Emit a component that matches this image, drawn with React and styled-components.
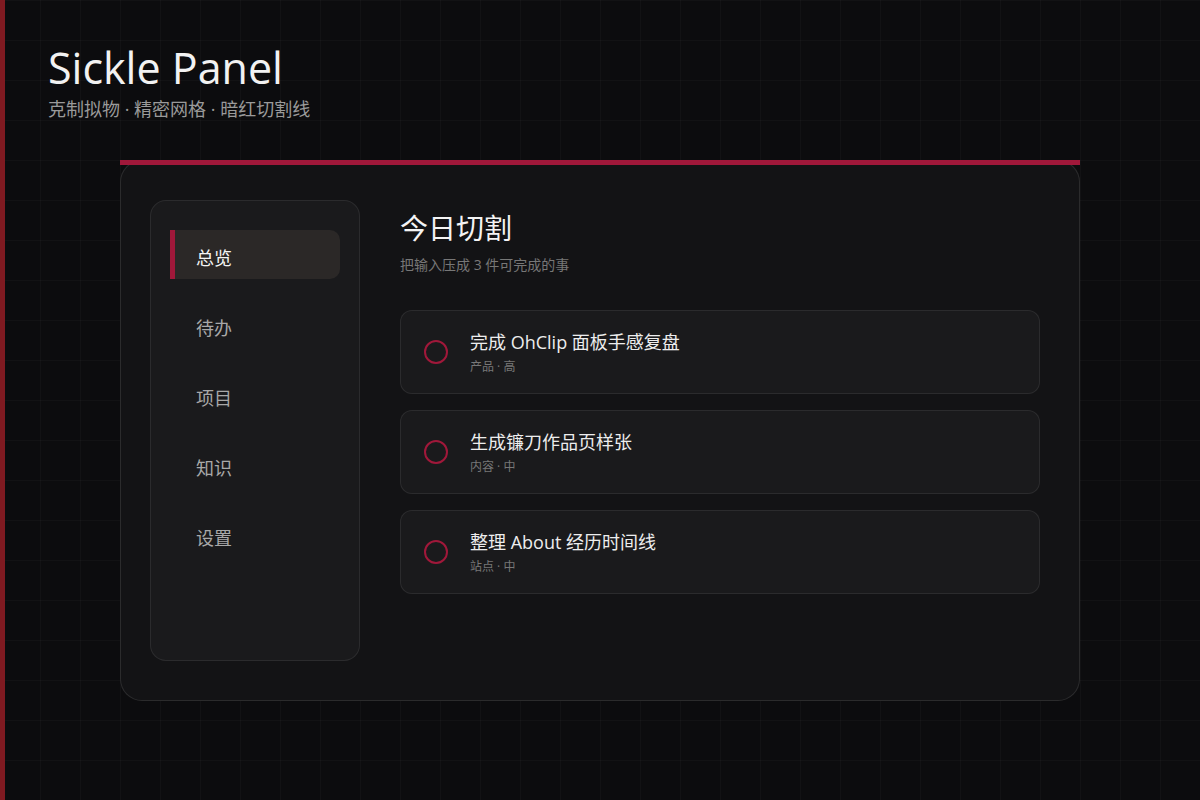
import React from "react";
import styled, { createGlobalStyle } from "styled-components";

const Global = createGlobalStyle`
  html, body {
    margin: 0;
    padding: 0;
    background: #0c0c0e;
  }
  body {
    font-family: "Open Sans", "Noto Sans CJK SC", sans-serif;
    color: #eee;
    min-height: 800px;
    background-color: #0c0c0e;
    background-image:
      linear-gradient(rgba(255,255,255,0.025) 1px, transparent 1px),
      linear-gradient(90deg, rgba(255,255,255,0.025) 1px, transparent 1px);
    background-size: 40px 40px;
  }
`;

const Page = styled.div`
  position: relative;
  min-height: 800px;
  box-sizing: border-box;
  padding: 39px 48px 0 43px;
  border-left: 5px solid #801a21;
`;

const Header = styled.header`
  display: flex;
  flex-direction: column;
`;

const Title = styled.h1`
  margin: 0;
  font-size: 43px;
  line-height: 58px;
  font-weight: 400;
  color: #f2f2f2;
`;

const Tagline = styled.p`
  margin: 0;
  font-size: 18px;
  line-height: 24px;
  color: #9a9a9a;
`;

const Card = styled.section`
  position: relative;
  width: 960px;
  box-sizing: border-box;
  margin: 39px 0 0 72px;
  background: #131315;
  border: 1px solid rgba(255, 255, 255, 0.1);
  border-radius: 22px;
  padding: 39px 39px 39px 29px;
  display: grid;
  grid-template-columns: 210px 1fr;
  gap: 40px;

  &::before {
    content: "";
    position: absolute;
    top: -1px;
    left: -1px;
    right: -1px;
    height: 5px;
    background: #a0183a;
  }
`;

const Sidebar = styled.nav`
  box-sizing: border-box;
  height: 461px;
  background: #1a1a1c;
  border: 1px solid rgba(255, 255, 255, 0.08);
  border-radius: 16px;
  padding: 29px 19px;
  display: flex;
  flex-direction: column;
  gap: 21px;
`;

const NavItem = styled.div`
  height: 49px;
  box-sizing: border-box;
  display: flex;
  align-items: center;
  padding: 6px 0 0 21px;
  border-left: 5px solid ${(p) => (p.$active ? "#a0183a" : "transparent")};
  border-radius: 0 10px 10px 0;
  background: ${(p) => (p.$active ? "#2b2827" : "transparent")};
  color: ${(p) => (p.$active ? "#f4f4f4" : "#a8a8a8")};
  font-size: 18px;
  line-height: 24px;
`;

const Main = styled.div`
  padding-top: 10px;
  display: flex;
  flex-direction: column;
`;

const SectionTitle = styled.h2`
  margin: 0;
  font-size: 28px;
  line-height: 36px;
  font-weight: 400;
  color: #f4f4f4;
`;

const SectionSub = styled.p`
  margin: 9px 0 0;
  font-size: 14px;
  line-height: 20px;
  color: #777;
`;

const TaskList = styled.div`
  margin-top: 35px;
  display: flex;
  flex-direction: column;
  gap: 16px;
`;

const Task = styled.div`
  height: 84px;
  box-sizing: border-box;
  background: #1a1a1c;
  border: 1px solid rgba(255, 255, 255, 0.08);
  border-radius: 12px;
  display: flex;
  align-items: center;
  padding-left: 23px;
  gap: 22px;
`;

const Check = styled.span`
  width: 24px;
  height: 24px;
  box-sizing: border-box;
  border: 2px solid #a0183a;
  border-radius: 50%;
  flex: none;
`;

const TaskText = styled.div`
  display: flex;
  flex-direction: column;
  gap: 4px;
  padding-top: 1px;
`;

const TaskTitle = styled.div`
  font-size: 18px;
  line-height: 24px;
  color: #ededed;
`;

const TaskMeta = styled.div`
  font-size: 12px;
  line-height: 18px;
  color: #777;
`;

const nav = ["总览", "待办", "项目", "知识", "设置"];
const tasks = [
  { title: "完成 OhClip 面板手感复盘", meta: "产品 · 高" },
  { title: "生成镰刀作品页样张", meta: "内容 · 中" },
  { title: "整理 About 经历时间线", meta: "站点 · 中" },
];

export default function App() {
  return (
    <>
      <Global />
      <Page>
        <Header>
          <Title>Sickle Panel</Title>
          <Tagline>克制拟物 · 精密网格 · 暗红切割线</Tagline>
        </Header>
        <Card>
          <Sidebar>
            {nav.map((n, i) => (
              <NavItem key={n} $active={i === 0}>
                {n}
              </NavItem>
            ))}
          </Sidebar>
          <Main>
            <SectionTitle>今日切割</SectionTitle>
            <SectionSub>把输入压成 3 件可完成的事</SectionSub>
            <TaskList>
              {tasks.map((t) => (
                <Task key={t.title}>
                  <Check />
                  <TaskText>
                    <TaskTitle>{t.title}</TaskTitle>
                    <TaskMeta>{t.meta}</TaskMeta>
                  </TaskText>
                </Task>
              ))}
            </TaskList>
          </Main>
        </Card>
      </Page>
    </>
  );
}
